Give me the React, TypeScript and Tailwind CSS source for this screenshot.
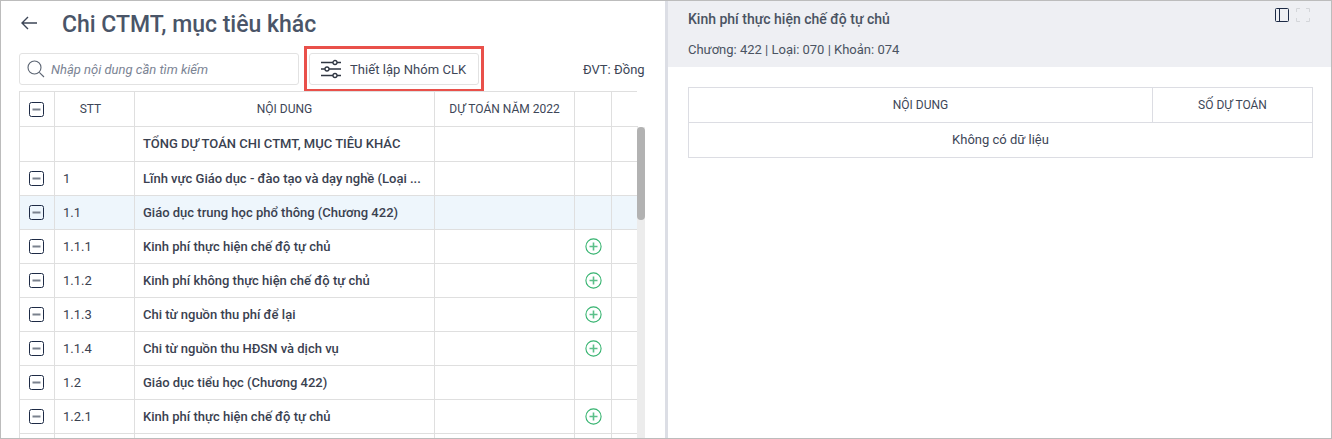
const cols = "grid grid-cols-[35px_80px_300px_140px_37px_26px]";
const cell = "border-r border-b border-[#dfdfdf] flex items-center min-w-0";

const rows = [
  { stt: "", text: "TỔNG DỰ TOÁN CHI CTMT, MỤC TIÊU KHÁC", check: false, plus: false, h: "h-[35px]" },
  { stt: "1", text: "Lĩnh vực Giáo dục - đào tạo và dạy nghề (Loại ...", check: true, plus: false, h: "h-[34px]" },
  { stt: "1.1", text: "Giáo dục trung học phổ thông (Chương 422)", check: true, plus: false, h: "h-[34px]", active: true },
  { stt: "1.1.1", text: "Kinh phí thực hiện chế độ tự chủ", check: true, plus: true, h: "h-[34px]" },
  { stt: "1.1.2", text: "Kinh phí không thực hiện chế độ tự chủ", check: true, plus: true, h: "h-[34px]" },
  { stt: "1.1.3", text: "Chi từ nguồn thu phí để lại", check: true, plus: true, h: "h-[34px]" },
  { stt: "1.1.4", text: "Chi từ nguồn thu HĐSN và dịch vụ", check: true, plus: true, h: "h-[34px]" },
  { stt: "1.2", text: "Giáo dục tiểu học (Chương 422)", check: true, plus: false, h: "h-[34px]" },
  { stt: "1.2.1", text: "Kinh phí thực hiện chế độ tự chủ", check: true, plus: true, h: "h-[34px]" },
  { stt: "", text: "", check: false, plus: false, h: "h-[34px]" },
];

function Check() {
  return (
    <svg width="15" height="15" viewBox="0 0 15 15" className="block">
      <rect x="0.5" y="0.5" width="14" height="14" rx="2" fill="none" stroke="#1d2a45" strokeWidth="1" />
      <rect x="3.5" y="6.5" width="8" height="2" fill="#7a818d" />
    </svg>
  );
}

function Plus() {
  return (
    <svg width="17" height="17" viewBox="0 0 17 17" className="block">
      <circle cx="8.5" cy="8.5" r="7.6" fill="none" stroke="#35b36f" strokeWidth="1.1" />
      <path d="M8.5 4.5v8M4.5 8.5h8" stroke="#5cc08a" strokeWidth="1.6" fill="none" />
    </svg>
  );
}

function Sliders() {
  return (
    <svg width="20" height="20" viewBox="0 0 20 20" className="block" fill="none" stroke="#2f3642" strokeWidth="1.3">
      <path d="M0 3.5h12M16 3.5h4M0 10h4M8 10h12M0 16.5h12M16 16.5h4" />
      <circle cx="14" cy="3.5" r="2" />
      <circle cx="6" cy="10" r="2" />
      <circle cx="14" cy="16.5" r="2" />
    </svg>
  );
}

export default function App() {
  return (
    <div className="w-[1332px] h-[439px] overflow-hidden flex border border-[#bcbcbc] bg-white font-['Roboto',sans-serif] text-[#333a47]">
      <div className="w-[664px] shrink-0 flex flex-col pl-[18px] overflow-hidden">
        <div className="h-[45px] shrink-0 flex items-center">
          <svg width="16" height="14" viewBox="0 0 16 14" className="ml-[2px] mt-[-1px]" fill="none" stroke="#3d4657" strokeWidth="1.4">
            <path d="M16 7H1M7 1L1 7l6 6" />
          </svg>
          <h1 className="ml-[25px] pt-[2px] text-[23px] leading-[30px] font-medium text-[#4a5568]">Chi CTMT, mục tiêu khác</h1>
        </div>
        <div className="h-[45px] shrink-0 flex items-start">
          <div className="w-[280px] h-[32px] mt-[7px] flex items-center border border-[#e2e2e2] rounded-[3px] pl-[7px]">
            <svg width="18" height="18" viewBox="0 0 18 18" fill="none" stroke="#5b6472" strokeWidth="1.1">
              <circle cx="7.5" cy="7.5" r="6.5" />
              <path d="M12.3 12.3L17 17" />
            </svg>
            <span className="ml-[6px] pt-[2px] text-[13px] italic text-[#7b8494]">Nhập nội dung cần tìm kiếm</span>
          </div>
          <div className="ml-[5px] w-[180px] h-[46px] shrink-0 border-[3px] border-[#e9504a] px-[2px] py-[4px]">
            <div className="h-[32px] flex items-center border border-[#e2e2e2] rounded-[3px] pl-[11px]">
              <Sliders />
              <span className="ml-[9px] pt-[2px] text-[13px] tracking-[0.05px] text-[#3d4657]">Thiết lập Nhóm CLK</span>
            </div>
          </div>
          <span className="ml-[99px] mt-[15px] text-[13px] leading-[18px] whitespace-nowrap text-[#3d4657]">ĐVT: Đồng</span>
        </div>
        <div className={`${cols} w-[618px] h-[36px] shrink-0 border-t border-l border-[#dfdfdf] text-[12px] text-[#3d4657]`}>
          <div className={`${cell} justify-center pr-[1px]`}><Check /></div>
          <div className={`${cell} justify-center pr-[8px]`}>STT</div>
          <div className={`${cell} justify-center`}>NỘI DUNG</div>
          <div className={`${cell} justify-center`}>DỰ TOÁN NĂM 2022</div>
          <div className={cell} />
          <div className="border-b border-[#dfdfdf]" />
        </div>
        <div className="flex flex-1 min-h-0">
          <div className="w-[618px] shrink-0 border-l border-[#dfdfdf] text-[13px] font-medium text-[#3a4150]">
            {rows.map((r, i) => (
              <div key={i} className={`${cols} ${r.h} ${r.active ? "bg-[#eef6fc]" : ""}`}>
                <div className={`${cell} justify-center pr-[1px]`}>{r.check && <Check />}</div>
                <div className={`${cell} pl-[8px] font-normal`}>{r.stt}</div>
                <div className={`${cell} pl-[8px]`}><span className="whitespace-nowrap">{r.text}</span></div>
                <div className={cell} />
                <div className={`${cell} justify-center`}>{r.plus && <Plus />}</div>
                <div className="border-b border-[#dfdfdf]" />
              </div>
            ))}
          </div>
          <div className="w-[8px] shrink-0 bg-[#ececec]">
            <div className="h-[93px] rounded-[4px] bg-[#b2b2b2]" />
          </div>
        </div>
      </div>
      <div className="w-[3px] shrink-0 bg-[#dcdee5]" />
      <div className="flex-1 min-w-0 flex flex-col">
        <div className="h-[66px] shrink-0 bg-[#eeeff3] pl-[20px] pr-[21px] flex flex-col">
          <div className="flex justify-between items-start">
            <span className="mt-[9px] text-[14px] leading-[18px] font-medium text-[#4a5362]">Kinh phí thực hiện chế độ tự chủ</span>
            <div className="flex gap-[7px] mt-[7px]">
              <svg width="14" height="14" viewBox="0 0 14 14" fill="none" stroke="#1d2a45" strokeWidth="1">
                <rect x="0.5" y="0.5" width="13" height="13" rx="1" />
                <path d="M4.5 0.5v13" />
              </svg>
              <svg width="14" height="14" viewBox="0 0 14 14" fill="none" stroke="#d4d6da" strokeWidth="1">
                <path d="M0.5 4V0.5H4M10 0.5h3.5V4M13.5 10v3.5H10M4 13.5H0.5V10" />
              </svg>
            </div>
          </div>
          <span className="mt-[14px] text-[13px] leading-[16px] text-[#4a5362]">Chương: 422 | Loại: 070 | Khoản: 074</span>
        </div>
        <div className="mt-[20px] ml-[20px] w-[625px] border border-[#dcdde3] text-[12px]">
          <div className="grid grid-cols-[464px_1fr] h-[35px] border-b border-[#dcdde3] text-[#3d4657]">
            <div className="flex items-center justify-center border-r border-[#dcdde3]">NỘI DUNG</div>
            <div className="flex items-center justify-center">SỐ DỰ TOÁN</div>
          </div>
          <div className="h-[34px] flex items-center justify-center text-[13px] text-[#3d4657]">Không có dữ liệu</div>
        </div>
      </div>
    </div>
  );
}
